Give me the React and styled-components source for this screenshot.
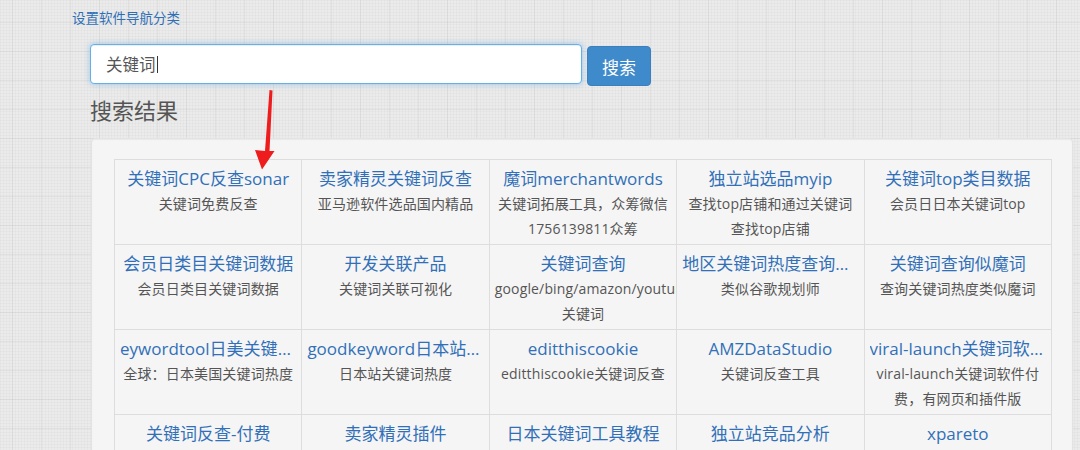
import React from "react";
import styled, { createGlobalStyle } from "styled-components";

const GlobalStyle = createGlobalStyle`
  html, body {
    margin: 0;
    padding: 0;
  }
  body {
    background-color: #ebebeb;
    background-image:
      linear-gradient(to right, rgba(0,0,0,0.045) 1px, transparent 1px),
      linear-gradient(to bottom, rgba(0,0,0,0.045) 1px, transparent 1px),
      linear-gradient(to right, rgba(0,0,0,0.018) 1px, transparent 1px),
      linear-gradient(to bottom, rgba(0,0,0,0.018) 1px, transparent 1px);
    background-size: 29px 29px, 29px 29px, 3px 3px, 3px 3px;
    background-position: 12px 22px, 12px 22px, 0 0, 0 0;
    font-family: "Open Sans", "Noto Sans CJK SC", sans-serif;
    overflow: hidden;
  }
`;

const rows = [
  [
    { title: "关键词CPC反查sonar", desc: "关键词免费反查" },
    { title: "卖家精灵关键词反查", desc: "亚马逊软件选品国内精品" },
    { title: "魔词merchantwords", desc: "关键词拓展工具，众筹微信\n1756139811众筹" },
    { title: "独立站选品myip", desc: "查找top店铺和通过关键词\n查找top店铺" },
    { title: "关键词top类目数据", desc: "会员日日本关键词top" },
  ],
  [
    { title: "会员日类目关键词数据", desc: "会员日类目关键词数据" },
    { title: "开发关联产品", desc: "关键词关联可视化" },
    { title: "关键词查询", desc: "google/bing/amazon/youtube关键词" },
    { title: "地区关键词热度查询工具", desc: "类似谷歌规划师" },
    { title: "关键词查询似魔词", desc: "查询关键词热度类似魔词" },
  ],
  [
    { title: "eywordtool日美关键词热度查询", desc: "全球：日本美国关键词热度" },
    { title: "goodkeyword日本站关键词", desc: "日本站关键词热度" },
    { title: "editthiscookie", desc: "editthiscookie关键词反查" },
    { title: "AMZDataStudio", desc: "关键词反查工具" },
    { title: "viral-launch关键词软件付费", desc: "viral-launch关键词软件付\n费，有网页和插件版" },
  ],
  [
    { title: "关键词反查-付费", desc: "" },
    { title: "卖家精灵插件", desc: "" },
    { title: "日本关键词工具教程", desc: "" },
    { title: "独立站竞品分析", desc: "" },
    { title: "xpareto", desc: "" },
  ],
];

const Page = styled.div`
  position: relative;
  padding: 9px 0 0 72px;
`;

const NavLink = styled.a`
  display: block;
  font-size: 13.5px;
  line-height: 18px;
  color: #2f6fb6;
  text-decoration: none;
`;

const SearchForm = styled.form`
  display: flex;
  align-items: flex-start;
  gap: 5px;
  margin: 17px 0 0 18px;
`;

const SearchBox = styled.div`
  box-sizing: border-box;
  width: 492px;
  height: 40px;
  padding: 0 15px;
  display: flex;
  align-items: center;
  background: #fff;
  border: 1px solid #66afe9;
  border-radius: 4px;
  box-shadow: inset 0 1px 1px rgba(0,0,0,.075), 0 0 6px rgba(102,175,233,.6);
  font-size: 16.5px;
  color: #555;
`;

const Caret = styled.span`
  display: inline-block;
  width: 1px;
  height: 17px;
  margin-left: 1px;
  background: #333;
`;

const SearchButton = styled.button`
  box-sizing: border-box;
  width: 64px;
  height: 40px;
  margin-top: 2px;
  border: 1px solid #3a80bf;
  border-radius: 4px;
  background: #3f8acb;
  color: #fff;
  font-family: "Open Sans", "Noto Sans CJK SC", sans-serif;
  font-size: 17px;
`;

const Heading = styled.h2`
  margin: 9px 0 0 18px;
  font-size: 22px;
  line-height: 30px;
  font-weight: 400;
  color: #555;
`;

const Well = styled.div`
  box-sizing: border-box;
  width: 982px;
  margin: 13px 0 0 19px;
  padding: 20px 20px 20px 22px;
  background: #f5f5f5;
  border: 1px solid #e3e3e3;
  border-radius: 4px;
  box-shadow: inset 0 1px 1px rgba(0,0,0,.05);
`;

const Table = styled.table`
  width: 938px;
  table-layout: fixed;
  border-collapse: collapse;
`;

const Cell = styled.td`
  height: 85px;
  padding: 7px 5px 2px;
  vertical-align: top;
  text-align: center;
  border: 1px solid #ddd;
  box-sizing: border-box;
  overflow: hidden;
`;

const Title = styled.a`
  display: block;
  font-size: 17px;
  line-height: 24px;
  color: #3170b8;
  text-decoration: none;
  white-space: nowrap;
  overflow: hidden;
  text-overflow: ellipsis;
`;

const Desc = styled.div`
  font-size: 14px;
  line-height: 25px;
  letter-spacing: 0.15px;
  color: #555;
  white-space: pre-line;
`;

const Arrow = styled.svg`
  position: absolute;
  left: 250px;
  top: 86px;
  width: 30px;
  height: 90px;
`;

export default function App() {
  return (
    <>
      <GlobalStyle />
      <Page>
        <NavLink href="#">设置软件导航分类</NavLink>
        <SearchForm onSubmit={(e) => e.preventDefault()}>
          <SearchBox>
            关键词
            <Caret />
          </SearchBox>
          <SearchButton type="submit">搜索</SearchButton>
        </SearchForm>
        <Heading>搜索结果</Heading>
        <Well>
          <Table>
            <tbody>
              {rows.map((row, i) => (
                <tr key={i}>
                  {row.map((c, j) => (
                    <Cell key={j}>
                      <Title href="#">{c.title}</Title>
                      {c.desc && <Desc>{c.desc}</Desc>}
                    </Cell>
                  ))}
                </tr>
              ))}
            </tbody>
          </Table>
        </Well>
        <Arrow viewBox="250 86 30 90">
          <polygon
            points="269.5,90 272.5,90.5 269.5,151 274.5,151 262,169.5 255,150 265,151"
            fill="#ee1c1c"
          />
        </Arrow>
      </Page>
    </>
  );
}
